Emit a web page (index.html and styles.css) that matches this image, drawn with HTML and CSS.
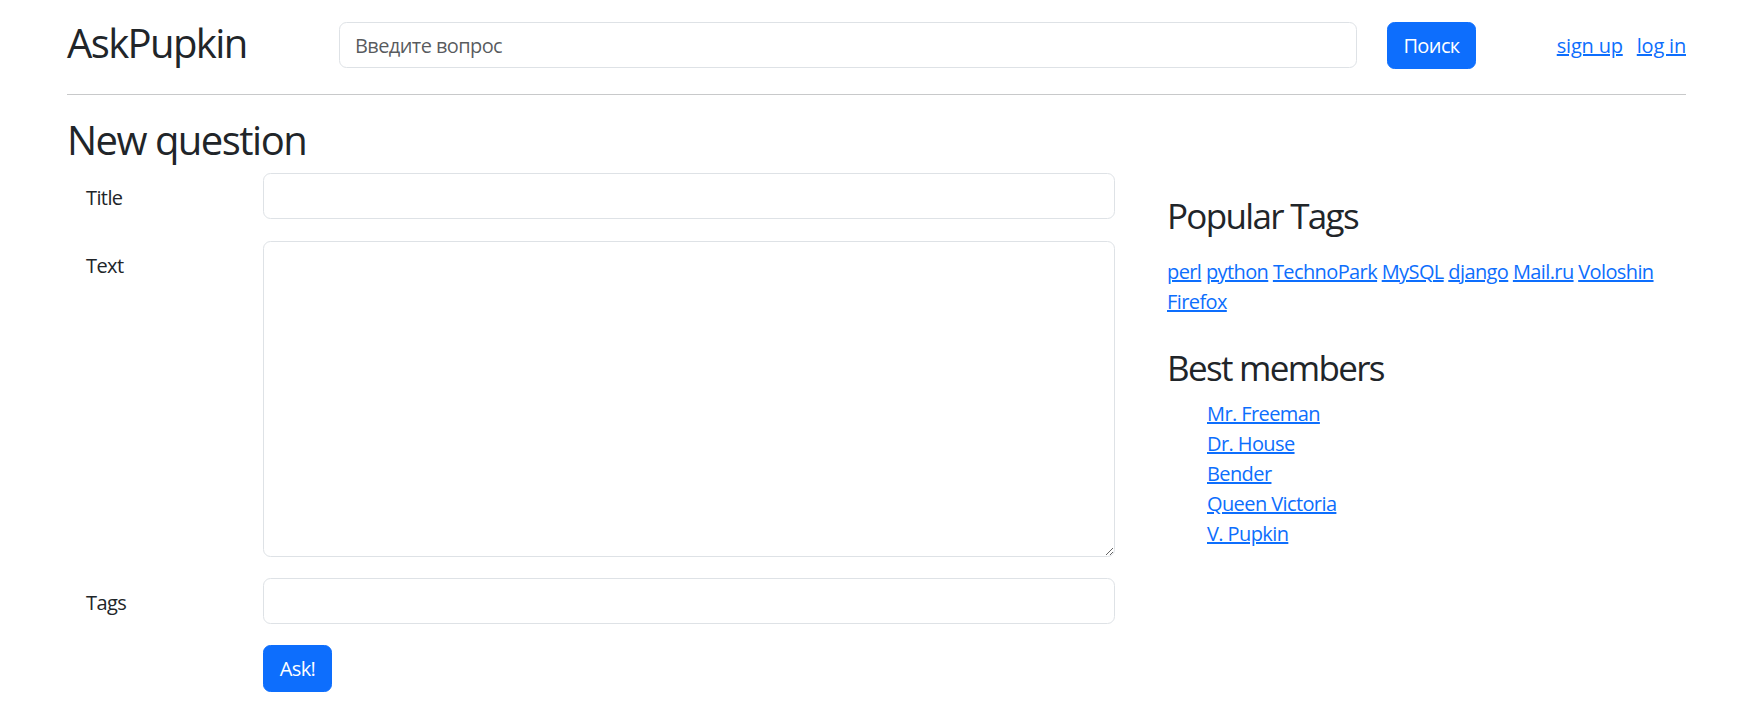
FILE: index.html
```html
<!DOCTYPE html>
<html lang="ru">
<head>
<meta charset="utf-8">
<title>AskPupkin</title>
<link rel="stylesheet" href="styles.css">
</head>
<body>
<div class="page">
  <header class="topbar">
    <div class="brand">AskPupkin</div>
    <form class="search">
      <input class="field search-field" type="text" placeholder="Введите вопрос">
      <button class="btn search-btn" type="button">Поиск</button>
    </form>
    <nav class="auth">
      <a href="#">sign up</a>
      <a href="#">log in</a>
    </nav>
  </header>
  <hr class="divider">
  <main class="layout">
    <section class="main-col">
      <h2 class="page-title">New question</h2>
      <form class="ask-form">
        <div class="form-row">
          <label class="form-label">Title</label>
          <input class="field" type="text">
        </div>
        <div class="form-row">
          <label class="form-label">Text</label>
          <textarea class="field area"></textarea>
        </div>
        <div class="form-row">
          <label class="form-label">Tags</label>
          <input class="field" type="text">
        </div>
        <div class="form-row">
          <span class="form-label"></span>
          <button class="btn ask-btn" type="button">Ask!</button>
        </div>
      </form>
    </section>
    <aside class="side">
      <h3 class="side-title">Popular Tags</h3>
      <p class="tags">
        <a href="#">perl</a> <a href="#">python</a> <a href="#">TechnoPark</a> <a href="#">MySQL</a> <a href="#">django</a> <a href="#">Mail.ru</a> <a href="#">Voloshin</a> <a href="#">Firefox</a>
      </p>
      <h3 class="side-title members-title">Best members</h3>
      <ul class="members">
        <li><a href="#">Mr. Freeman</a></li>
        <li><a href="#">Dr. House</a></li>
        <li><a href="#">Bender</a></li>
        <li><a href="#">Queen Victoria</a></li>
        <li><a href="#">V. Pupkin</a></li>
      </ul>
    </aside>
  </main>
</div>
</body>
</html>
```
FILE: styles.css
```css
* { box-sizing: border-box; }
html, body { margin: 0; padding: 0; background: #fff; }
body {
  font-family: "Open Sans", "Liberation Sans", sans-serif;
  font-size: 20px;
  line-height: 30px;
  letter-spacing: -0.03em;
  color: #212529;
}
a { color: #0d6efd; text-decoration: underline; }

.page { width: 1619px; margin-left: 67px; }

/* header */
.topbar {
  display: flex;
  align-items: flex-start;
  padding-top: 22px;
  height: 69px;
}
.brand {
  width: 272px;
  flex: none;
  margin-top: -3px;
  font-size: 40px;
  line-height: 48px;
  letter-spacing: -0.04em;
}
.search { display: flex; gap: 30px; }
.search-field { width: 1018px; height: 47px; }
.search-btn { width: 89px; }
.auth {
  flex: 1;
  display: flex;
  justify-content: flex-end;
  gap: 14px;
  margin-top: 9px;
  line-height: 30px;
  letter-spacing: -0.01em;
}

/* controls */
.field {
  display: block;
  height: 46px;
  padding: 7px 15px;
  font: inherit;
  letter-spacing: inherit;
  color: #212529;
  background: #fff;
  border: 1px solid #dee2e6;
  border-radius: 7.5px;
  outline: none;
}
.field::placeholder { color: rgba(33, 37, 41, 0.75); }

.btn {
  height: 47px;
  padding: 8px 0;
  font: inherit;
  letter-spacing: inherit;
  text-align: center;
  color: #fff;
  background: #0d6efd;
  border: 1px solid #0d6efd;
  border-radius: 7.5px;
}
.ask-btn { width: 69px; }

.divider {
  margin: 25px 0 0;
  border: 0;
  border-top: 1px solid #c8c9ca;
  height: 0;
}

/* body layout */
.layout { display: flex; align-items: flex-start; }
.main-col { width: 1100px; flex: none; }
.page-title {
  margin: 21px 0 0;
  font-size: 40px;
  line-height: 48px;
  font-weight: 400;
  letter-spacing: -0.038em;
}
.ask-form { margin-top: 9px; }
.form-row { display: flex; align-items: flex-start; margin-bottom: 21px; }
.form-row:first-child { margin-bottom: 22px; }
.form-label {
  width: 196px;
  flex: none;
  padding: 10px 0 6px 19px;
  line-height: 30px;
}
.form-row .field { width: 852px; }
.area { height: 316px; resize: vertical; }

/* sidebar */
.side { flex: 1; padding-top: 100px; }
.side-title {
  margin: 0;
  font-size: 35px;
  line-height: 42px;
  font-weight: 400;
  letter-spacing: -0.048em;
}
.tags { margin: 20px 0 0; }
.members-title { margin-top: 30px; }
.members {
  list-style: none;
  margin: 10px 0 0;
  padding-left: 40px;
}
```
